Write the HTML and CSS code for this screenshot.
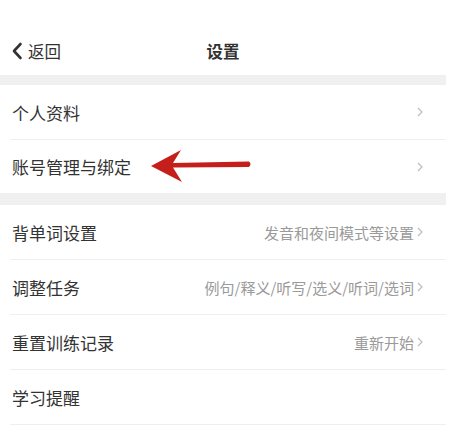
FILE: index.html
```html
<!DOCTYPE html>
<html lang="zh">
<head>
<meta charset="utf-8">
<link rel="stylesheet" href="styles.css">
</head>
<body>
<div class="page">
  <header class="nav">
    <div class="back">
      <svg class="back-icon" width="12" height="18" viewBox="0 0 12 18"><path d="M9.5 2 L3 9 L9.5 16" fill="none" stroke="#333" stroke-width="2.6" stroke-linecap="round" stroke-linejoin="round"/></svg>
      <span>返回</span>
    </div>
    <div class="title">设置</div>
  </header>
  <div class="band"></div>
  <div class="group">
    <div class="row"><span class="label">个人资料</span><span class="right"><svg class="chev" width="6" height="10" viewBox="0 0 6 10"><path d="M1 1 L5 5 L1 9" fill="none" stroke="#bdbdbd" stroke-width="1.2"/></svg></span></div>
    <div class="row last"><span class="label">账号管理与绑定</span>
      <svg class="red-arrow" width="104" height="36" viewBox="0 0 104 36"><path d="M2 18 L32 2 L24 15 L100 13.5 Q103 16 100 19 L24 19.5 L33 34 Z" fill="#c41f1a"/></svg>
      <span class="right"><svg class="chev" width="6" height="10" viewBox="0 0 6 10"><path d="M1 1 L5 5 L1 9" fill="none" stroke="#bdbdbd" stroke-width="1.2"/></svg></span></div>
  </div>
  <div class="band band2"></div>
  <div class="group">
    <div class="row"><span class="label">背单词设置</span><span class="right"><span class="sub">发音和夜间模式等设置</span><svg class="chev" width="6" height="10" viewBox="0 0 6 10"><path d="M1 1 L5 5 L1 9" fill="none" stroke="#bdbdbd" stroke-width="1.2"/></svg></span></div>
    <div class="row"><span class="label">调整任务</span><span class="right"><span class="sub">例句/释义/听写/选义/听词/选词</span><svg class="chev" width="6" height="10" viewBox="0 0 6 10"><path d="M1 1 L5 5 L1 9" fill="none" stroke="#bdbdbd" stroke-width="1.2"/></svg></span></div>
    <div class="row"><span class="label">重置训练记录</span><span class="right"><span class="sub">重新开始</span><svg class="chev" width="6" height="10" viewBox="0 0 6 10"><path d="M1 1 L5 5 L1 9" fill="none" stroke="#bdbdbd" stroke-width="1.2"/></svg></span></div>
    <div class="row"><span class="label">学习提醒</span><span class="right"></span></div>
    <div class="row"><span class="label"></span><span class="right"></span></div>
  </div>
</div>
</body>
</html>
```
FILE: styles.css
```css
html, body {
  margin: 0;
  padding: 0;
  background: #fff;
}
body {
  font-family: "Noto Sans CJK SC", "Noto Sans", sans-serif;
  color: #333;
  overflow: hidden;
  height: 443px;
}
.page {
  width: 446px;
}
.nav {
  height: 48px;
  padding-top: 27px;
  display: flex;
  align-items: center;
  position: relative;
}
.back {
  display: flex;
  align-items: center;
  gap: 5px;
  padding-left: 11px;
  font-size: 16.5px;
  color: #333;
}
.title {
  position: absolute;
  left: 0;
  right: 0;
  top: 27px;
  text-align: center;
  font-size: 16.5px;
  font-weight: 700;
  line-height: 48px;
}
.band {
  height: 10px;
  background: #f0f0f0;
}
.band2 {
  height: 12px;
}
.row {
  height: 54px;
  margin-left: 10px;
  border-bottom: 1px solid #efefef;
  display: flex;
  align-items: center;
  justify-content: space-between;
  padding-right: 23px;
  position: relative;
}
.row.last {
  border-bottom: none;
  height: 53px;
}
.label {
  font-size: 17px;
  color: #333;
  padding-left: 2px;
}
.right {
  display: flex;
  align-items: center;
  gap: 3px;
}
.sub {
  font-size: 15px;
  color: #9a9a9a;
}
.chev {
  display: block;
}
.red-arrow {
  position: absolute;
  left: 139px;
  top: 8px;
}
```
